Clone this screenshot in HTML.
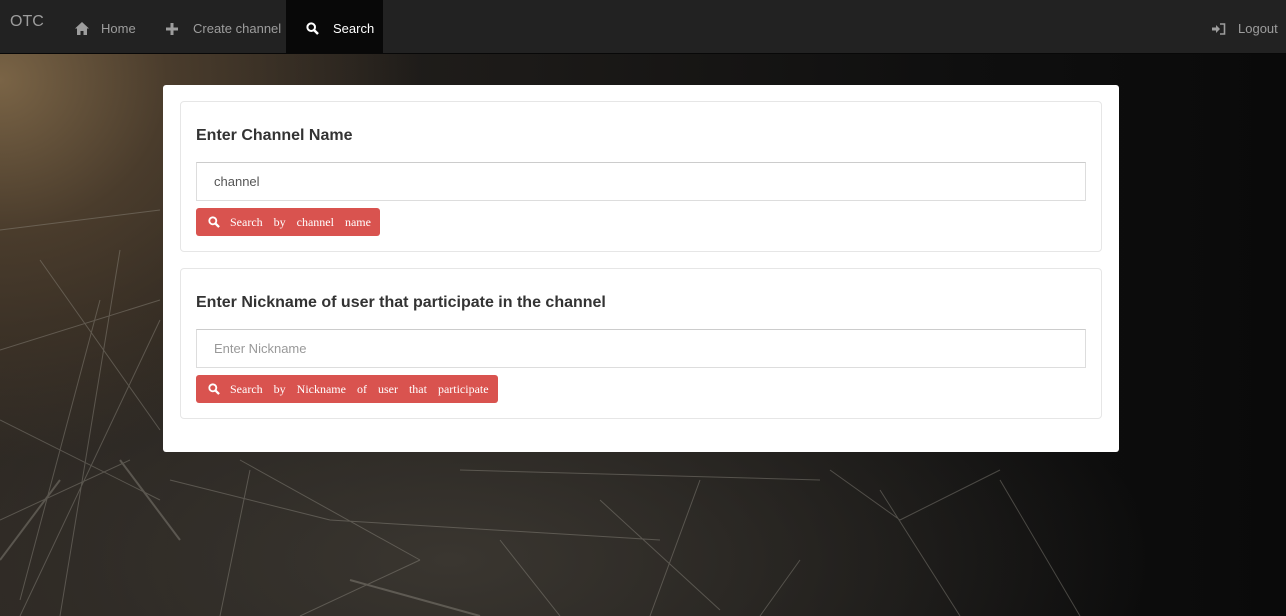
<!DOCTYPE html>
<html><head><style>
*{box-sizing:border-box;margin:0;padding:0}
body{width:1286px;height:616px;overflow:hidden;font-family:"Liberation Sans",sans-serif;position:relative;
background:radial-gradient(ellipse 420px 380px at 0px 80px,#7a6446 0%,#4a3c2c 40%,rgba(30,27,24,0) 100%),
radial-gradient(ellipse 700px 300px at 450px 560px,#3a3630 0%,rgba(20,20,20,0) 100%),
linear-gradient(90deg,#2a2520 0%,#1c1a18 40%,#0f0f0f 75%,#0a0a0a 100%);}
.bg{position:absolute;left:0;top:0}
nav{position:absolute;left:0;top:0;width:1286px;height:54px;background:#222;border-bottom:1px solid #080808;color:#9d9d9d;font-size:13px}
nav .brand{position:absolute;left:10px;top:13px;font-size:16px;color:#9d9d9d}
nav .it{position:absolute;top:2px;height:53px;display:flex;align-items:center;gap:12px;white-space:nowrap}
nav .act{background:#080808;color:#fff;top:0;height:54px;padding-top:2px}
.card{position:absolute;left:163px;top:85px;width:956px;height:367px;background:#fff;border-radius:3px}
.panel{position:absolute;left:17px;width:922px;border:1px solid #e6e6e6;border-radius:4px}
h3{position:absolute;left:15px;font-family:"Liberation Sans",sans-serif;font-weight:bold;font-size:16px;color:#333;white-space:nowrap}
.inp{position:absolute;left:15px;width:890px;height:39px;border:1px solid #ddd;border-top-color:#ccc;font-size:13px;color:#555;padding:0 17px;line-height:37px}
.btn{position:absolute;left:15px;height:28px;background:#d9534f;border-radius:3px;color:#fff;font-family:"Liberation Serif",serif;font-size:12px;display:flex;align-items:center;padding:0 9px 0 12px;word-spacing:8px;white-space:nowrap}
.btn svg{margin-right:10px;flex:none}
</style></head><body>
<svg class="bg" width="1286" height="616" stroke="#9a968c" stroke-width="1" fill="none" opacity="0.4">
<path d="M0 230 L160 210 M0 350 L160 300 M20 616 L160 320 M60 616 L120 250 M0 420 L160 500 M40 260 L160 430 M0 520 L130 460 M100 300 L20 600"/>
<path d="M170 480 L330 520 M240 460 L420 560 M330 520 L660 540 M460 470 L820 480 M600 500 L720 610 M830 470 L900 520 M900 520 L1000 470 M420 560 L300 616 M500 540 L560 616 M800 560 L760 616 M880 490 L960 616 M700 480 L650 616 M250 470 L220 616 M1000 480 L1080 616"/>
<path d="M120 460 L180 540 M60 480 L0 560 M350 580 L480 616" stroke-width="2"/>
</svg>
<nav>
<div class="brand">OTC</div>
<div class="it" style="left:75px"><svg width="14" height="13" viewBox="0 0 14 13"><path d="M7 0 L14 6.5 H12 V13 H8.5 V9 H5.5 V13 H2 V6.5 H0 Z" fill="#9d9d9d"/></svg>Home</div>
<div class="it" style="left:166px;gap:15px"><svg width="12" height="12" viewBox="0 0 12 12"><path d="M4.5 0H7.5V4.5H12V7.5H7.5V12H4.5V7.5H0V4.5H4.5Z" fill="#9d9d9d"/></svg>Create channel</div>
<div class="it act" style="left:286px;width:97px;padding-left:20px;gap:14px"><svg width="13" height="13" viewBox="0 0 13 13"><circle cx="5.2" cy="5.2" r="3.8" stroke="#fff" stroke-width="2" fill="none"/><path d="M8 8L12 12" stroke="#fff" stroke-width="2.5"/></svg>Search</div>
<div class="it" style="left:1212px"><svg width="14" height="12" viewBox="0 0 14 12"><path d="M0 4.5H4V2L8 6L4 10V7.5H0Z" fill="#9d9d9d"/><path d="M8 1H12.5V11H8" stroke="#9d9d9d" stroke-width="1.6" fill="none"/></svg>Logout</div>
</nav>
<div class="card">
<div class="panel" style="top:16px;height:151px">
<h3 style="top:25px">Enter Channel Name</h3>
<div class="inp" style="top:60px">channel</div>
<div class="btn" style="top:106px"><svg width="12" height="12" viewBox="0 0 13 13"><circle cx="5.2" cy="5.2" r="3.8" stroke="#fff" stroke-width="2" fill="none"/><path d="M8 8L12 12" stroke="#fff" stroke-width="2.5"/></svg>Search by channel name</div>
</div>
<div class="panel" style="top:183px;height:151px">
<h3 style="top:25px">Enter Nickname of user that participate in the channel</h3>
<div class="inp" style="top:60px;color:#999">Enter Nickname</div>
<div class="btn" style="top:106px"><svg width="12" height="12" viewBox="0 0 13 13"><circle cx="5.2" cy="5.2" r="3.8" stroke="#fff" stroke-width="2" fill="none"/><path d="M8 8L12 12" stroke="#fff" stroke-width="2.5"/></svg>Search by Nickname of user that participate</div>
</div>
</div>
</body></html>
